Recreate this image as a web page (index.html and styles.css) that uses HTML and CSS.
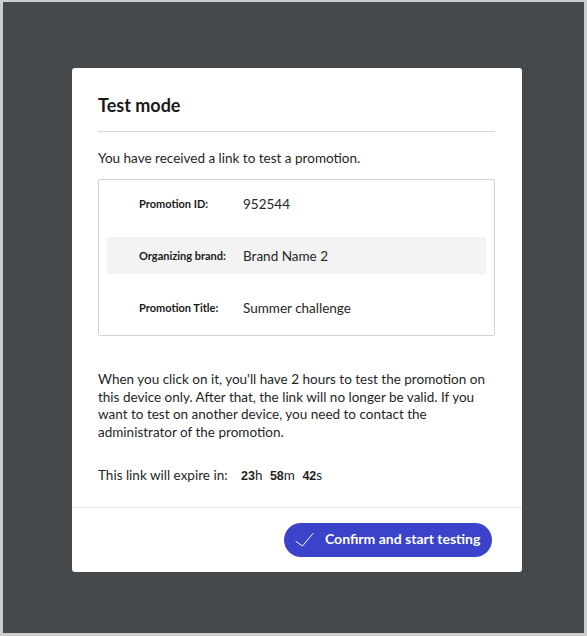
FILE: index.html
```html
<!DOCTYPE html>
<html>
<head>
<meta charset="utf-8">
<link rel="stylesheet" href="styles.css">
</head>
<body>
<div class="overlay">
  <div class="modal">
    <div class="modal-header">
      <h1 class="title">Test mode</h1>
    </div>
    <div class="modal-body">
      <p class="intro">You have received a link to test a promotion.</p>
      <div class="details">
        <div class="row">
          <div class="label">Promotion ID:</div>
          <div class="value">952544</div>
        </div>
        <div class="row shaded">
          <div class="label">Organizing brand:</div>
          <div class="value">Brand Name 2</div>
        </div>
        <div class="row">
          <div class="label">Promotion Title:</div>
          <div class="value">Summer challenge</div>
        </div>
      </div>
      <p class="info">When you click on it, you'll have 2 hours to test the promotion on this device only. After that, the link will no longer be valid. If you want to test on another device, you need to contact the administrator of the promotion.</p>
      <p class="expiry">This link will expire in: <span class="countdown"><b>23</b>h <b>58</b>m <b>42</b>s</span></p>
    </div>
    <div class="modal-footer">
      <button class="btn-primary">
        <svg class="check" width="20" height="16" viewBox="0 0 20 16"><path d="M1 9.5 L7.5 14 L18 1.5" fill="none" stroke="#fff" stroke-width="1" stroke-linecap="round" stroke-linejoin="round"/></svg>
        <span class="btn-label">Confirm and start testing</span>
      </button>
    </div>
  </div>
</div>
</body>
</html>
```
FILE: styles.css
```css
html, body {
  margin: 0;
  padding: 0;
}
body {
  width: 587px;
  height: 636px;
  box-sizing: border-box;
  border: 3px solid #cbcdce;
  border-top-width: 2px;
  background: #45494c;
  font-family: Lato, "Noto Sans", sans-serif;
  color: #1f1f1f;
}
.overlay {
  display: flex;
  align-items: flex-start;
  padding: 66px 0 0 69px;
}
.modal {
  width: 450px;
  height: 504px;
  box-sizing: border-box;
  background: #fff;
  border-radius: 3px;
  display: flex;
  flex-direction: column;
}
.modal-header {
  margin: 0 27px 0 26px;
  padding: 25px 0 14px;
  border-bottom: 1px solid #d6d6d6;
}
.title {
  margin: 0;
  font-size: 18px;
  line-height: 24px;
  font-weight: 700;
  color: #1a1a1a;
}
.modal-body {
  padding: 0 27px 0 26px;
  flex: 1;
}
.intro {
  margin: 17px 0 12px;
  font-size: 13.5px;
  line-height: 18px;
}
.details {
  border: 1px solid #d3d3d3;
  border-radius: 2px;
  padding: 5px 8px 9px;
  display: flex;
  flex-direction: column;
  gap: 15px;
}
.row {
  height: 37px;
  display: flex;
  align-items: center;
  padding-left: 32px;
}
.row.shaded {
  background: #f3f3f3;
}
.label {
  width: 104px;
  font-size: 11px;
  font-weight: 700;
  color: #1a1a1a;
}
.value {
  font-size: 13.5px;
  color: #262626;
}
.info {
  margin: 35px 0 0;
  font-size: 13.5px;
  line-height: 17.5px;
}
.expiry {
  margin: 25px 0 0;
  font-size: 13.5px;
  line-height: 18px;
}
.countdown {
  margin-left: 6px;
}
.countdown b {
  font-family: "Liberation Sans", Arial, sans-serif;
  font-size: 12.5px;
  font-weight: 700;
  margin-left: 4px;
}
.modal-footer {
  border-top: 1px solid #e8e8e8;
  padding: 15px 30px 15px 0;
  display: flex;
  justify-content: flex-end;
}
.btn-primary {
  width: 208px;
  height: 34px;
  border: none;
  border-radius: 17px;
  background: #3a43c9;
  color: #fff;
  font-family: Lato, "Noto Sans", sans-serif;
  font-size: 14px;
  font-weight: 700;
  display: flex;
  align-items: center;
  padding: 0 10px 0 11px;
  gap: 10px;
  white-space: nowrap;
}
.btn-label {
  padding-bottom: 3px;
}
.check {
  flex: none;
}
```
